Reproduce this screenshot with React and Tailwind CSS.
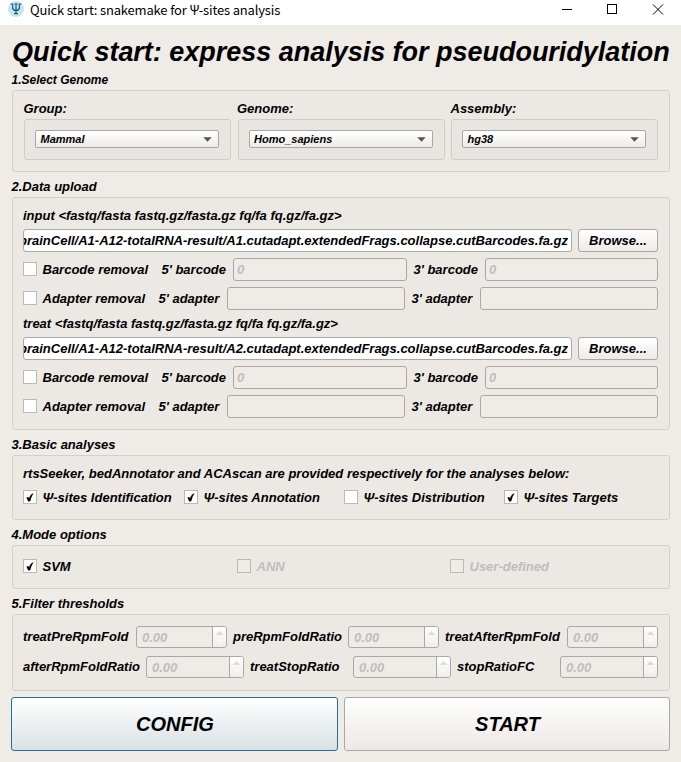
const field =
  "h-[23px] shrink-0 rounded-[3px] border border-[#aaa7a4] bg-[#efebe7] flex items-center";

function Label({ className = "", children }) {
  return <span className={`shrink-0 whitespace-nowrap leading-4 ${className}`}>{children}</span>;
}

function Heading({ children, className = "", size = "text-[13px]" }) {
  return <h2 className={`-ml-[0.5px] h-4 whitespace-nowrap leading-4 ${size} ${className}`}>{children}</h2>;
}

function Panel({ className = "", children }) {
  return (
    <section className={`rounded-[3px] border border-[#d4d1cd] bg-[#ece9e4] pr-[11px] pl-[10px] ${className}`}>
      {children}
    </section>
  );
}

function Check({ checked, disabled, children, className = "" }) {
  return (
    <div className={`flex h-[15px] shrink-0 items-start ${className}`}>
      <span
        className={`flex h-[14px] w-[14px] shrink-0 items-center justify-center border border-[#bdbab6] ${
          disabled ? "bg-[#efebe7]" : "bg-white"
        }`}
      >
        {checked && (
          <svg width="8" height="9" viewBox="0 0 8 9">
            <path d="M0.4 4.4 L2.2 3.9 L3.1 5.3 C3.8 2.8 5 1 7.2 0.2 L7.4 0.7 C6 2.6 5 5.2 4.3 8.2 L2.2 8.6 Z" fill="#000" />
          </svg>
        )}
      </span>
      <span className={`ml-[5.5px] whitespace-nowrap leading-4 ${disabled ? "text-[#bebebe]" : ""}`}>{children}</span>
    </div>
  );
}

function Select({ label, value }) {
  return (
    <div className="w-[207px]">
      <Label className="-ml-[0.5px] block h-4">{label}</Label>
      <div className="mt-[2px] h-[41px] rounded-[3px] border border-[#d0cdc9] bg-[#e9e6e1] pt-[10px] pr-[11px] pl-[10px]">
        <div className="flex h-[18px] items-center justify-between rounded-[2px] border border-[#a9a6a3] bg-linear-to-b from-white to-[#eeebe8] pr-[6px] pl-[4.5px] text-[11px]">
          <span className="leading-4">{value}</span>
          <svg width="9" height="5" viewBox="0 0 9 5">
            <path d="M0.3 0.3 H8.7 L4.5 4.8 Z" fill="#555" />
          </svg>
        </div>
      </div>
    </div>
  );
}

function Browse() {
  return (
    <button className="h-[23px] w-[80px] shrink-0 rounded-[3px] border border-[#aaa7a4] bg-linear-to-b from-white to-[#eeeae8]">
      Browse...
    </button>
  );
}

function Upload({ kind, file }) {
  return (
    <div>
      <Label className="block h-4">{kind} &lt;fastq/fasta fastq.gz/fasta.gz fq/fa fq.gz/fa.gz&gt;</Label>
      <div className="mt-[5px] flex gap-[6px]">
        <div className="flex h-[23px] w-[549px] shrink-0 items-center justify-end overflow-hidden rounded-[3px] border border-[#aaa7a4] bg-white pr-[3px]">
          <span className="whitespace-nowrap">{file}</span>
        </div>
        <Browse />
      </div>
      <div className="mt-[6px] flex items-center">
        <Check className="w-[138.5px]">Barcode removal</Check>
        <Label className="w-[71.5px]">5' barcode</Label>
        <div className={`${field} w-[174px] pl-[3px] text-[#bebebe]`}>0</div>
        <Label className="ml-[6.5px] w-[71.5px]">3' barcode</Label>
        <div className={`${field} w-[173px] pl-[3px] text-[#bebebe]`}>0</div>
      </div>
      <div className="mt-[6px] flex items-center">
        <Check className="w-[135.5px]">Adapter removal</Check>
        <Label className="w-[68.5px]">5' adapter</Label>
        <div className={`${field} w-[178px]`} />
        <Label className="ml-[6.5px] w-[68.5px]">3' adapter</Label>
        <div className={`${field} w-[178px]`} />
      </div>
    </div>
  );
}

function Spin({ className = "" }) {
  return (
    <div
      className={`flex h-[22px] shrink-0 overflow-hidden rounded-[3px] border border-[#aaa7a4] bg-[#efebe7] text-[#bebebe] ${className}`}
    >
      <span className="flex-1 pt-px pl-[5px] leading-5">0.00</span>
      <span className="flex w-[14px] flex-col items-center justify-between border-l border-[#aaa7a4] bg-linear-to-b from-white to-[#f0edea] py-1">
        <svg width="9" height="4" viewBox="0 0 9 4">
          <path d="M0.5 4 L4.5 0 L8.5 4 Z" fill="#dedbd8" />
        </svg>
        <svg width="9" height="4" viewBox="0 0 9 4">
          <path d="M0.5 0 L4.5 4 L8.5 0 Z" fill="#f8f7f6" />
        </svg>
      </span>
    </div>
  );
}

export default function App() {
  return (
    <main className="h-[762px] w-[681px] overflow-hidden bg-[#efebe7] font-['Liberation_Sans',Arial,sans-serif] text-[13px] font-bold text-black italic">
      <header className="flex h-[25px] bg-white pl-2 font-['Noto_Sans_CJK_SC','Noto_Sans',sans-serif] text-[13px] font-normal not-italic">
        <svg className="mt-px shrink-0" width="16" height="16" viewBox="0 0 16 16">
          <circle cx="8" cy="8" r="8" fill="#c5e7f5" />
          <path
            d="M2.6 3 H4.6 V6.6 Q4.8 9.4 8 9.6 Q11.2 9.4 11.4 6.6 V3 H13.4 M8 3 V12.6 M6.2 3 H9.8 M6 12.6 H10"
            fill="none"
            stroke="#24566d"
            strokeWidth="1.2"
          />
        </svg>
        <span className="ml-[6px] flex-1 whitespace-nowrap leading-[19px] tracking-[-0.17px]">
          Quick start: snakemake for Ψ-sites analysis
        </span>
        <svg className="mr-[13px] shrink-0" width="107" height="25" viewBox="0 0 107 25" fill="none" stroke="#000">
          <path d="M1 9.5 H11" />
          <rect x="46.5" y="4.5" width="9" height="9" />
          <path d="M92 4.5 L102 14.5 M102 4.5 L92 14.5" />
        </svg>
      </header>

      <div className="pr-[11px] pl-3">
        <h1 className="mt-[11px] h-8 whitespace-nowrap text-[27px] leading-8 tracking-[-0.02px]">
          Quick start: express analysis for pseudouridylation
        </h1>

        <Heading className="mt-1" size="text-[12px]">1.Select Genome</Heading>
        <Panel className="mt-[2px] h-[82px] pt-[10px]">
          <div className="flex justify-between pl-px">
            <Select label="Group:" value="Mammal" />
            <Select label="Genome:" value="Homo_sapiens" />
            <Select label="Assembly:" value="hg38" />
          </div>
        </Panel>

        <Heading className="mt-[7px]">2.Data upload</Heading>
        <Panel className="mt-[2px] h-[233px] pt-[10px]">
          <Upload
            kind="input"
            file="brainCell/A1-A12-totalRNA-result/A1.cutadapt.extendedFrags.collapse.cutBarcodes.fa.gz"
          />
          <div className="mt-[6px]">
            <Upload
              kind="treat"
              file="brainCell/A1-A12-totalRNA-result/A2.cutadapt.extendedFrags.collapse.cutBarcodes.fa.gz"
            />
          </div>
        </Panel>

        <Heading className="mt-[7px]">3.Basic analyses</Heading>
        <Panel className="mt-[2px] h-[65px] pt-[10px]">
          <Label className="block h-4">
            rtsSeeker, bedAnnotator and ACAscan are provided respectively for the analyses below:
          </Label>
          <div className="mt-2 flex">
            <Check checked className="w-[161px]">Ψ-sites Identification</Check>
            <Check checked className="w-[160px]">Ψ-sites Annotation</Check>
            <Check className="w-[160px]">Ψ-sites Distribution</Check>
            <Check checked>Ψ-sites Targets</Check>
          </div>
        </Panel>

        <Heading className="mt-[7px]">4.Mode options</Heading>
        <Panel className="mt-[2px] h-11 pt-[13px]">
          <div className="flex">
            <Check checked className="w-[214px]">SVM</Check>
            <Check disabled className="w-[213px]">ANN</Check>
            <Check disabled>User-defined</Check>
          </div>
        </Panel>

        <Heading className="mt-[7px]">5.Filter thresholds</Heading>
        <Panel className="mt-[2px] h-[77px] pt-[11px]">
          <div className="flex items-center">
            <Label className="w-[113px]">treatPreRpmFold</Label>
            <Spin className="w-[91px]" />
            <Label className="ml-[6px] w-[115px]">preRpmFoldRatio</Label>
            <Spin className="w-[91px]" />
            <Label className="ml-[6px] w-[122px]">treatAfterRpmFold</Label>
            <Spin className="w-[91px]" />
          </div>
          <div className="mt-2 flex items-center">
            <Label className="w-[123px]">afterRpmFoldRatio</Label>
            <Spin className="w-[98px]" />
            <Label className="ml-[6px] w-[103px]">treatStopRatio</Label>
            <Spin className="w-[98px]" />
            <Label className="ml-[6px] w-[103px]">stopRatioFC</Label>
            <Spin className="w-[98px]" />
          </div>
        </Panel>

        <div className="mt-[6px] -ml-px flex gap-[6px] text-[20px]">
          <button className="h-[54px] w-[327px] rounded-[3px] border border-[#256f9c] bg-linear-to-b from-white to-[#d9e1e4] pl-px">
            CONFIG
          </button>
          <button className="h-[54px] w-[326px] rounded-[3px] border border-[#aaa7a4] bg-linear-to-b from-white to-[#ece8e5] pl-px">
            START
          </button>
        </div>
      </div>
    </main>
  );
}
